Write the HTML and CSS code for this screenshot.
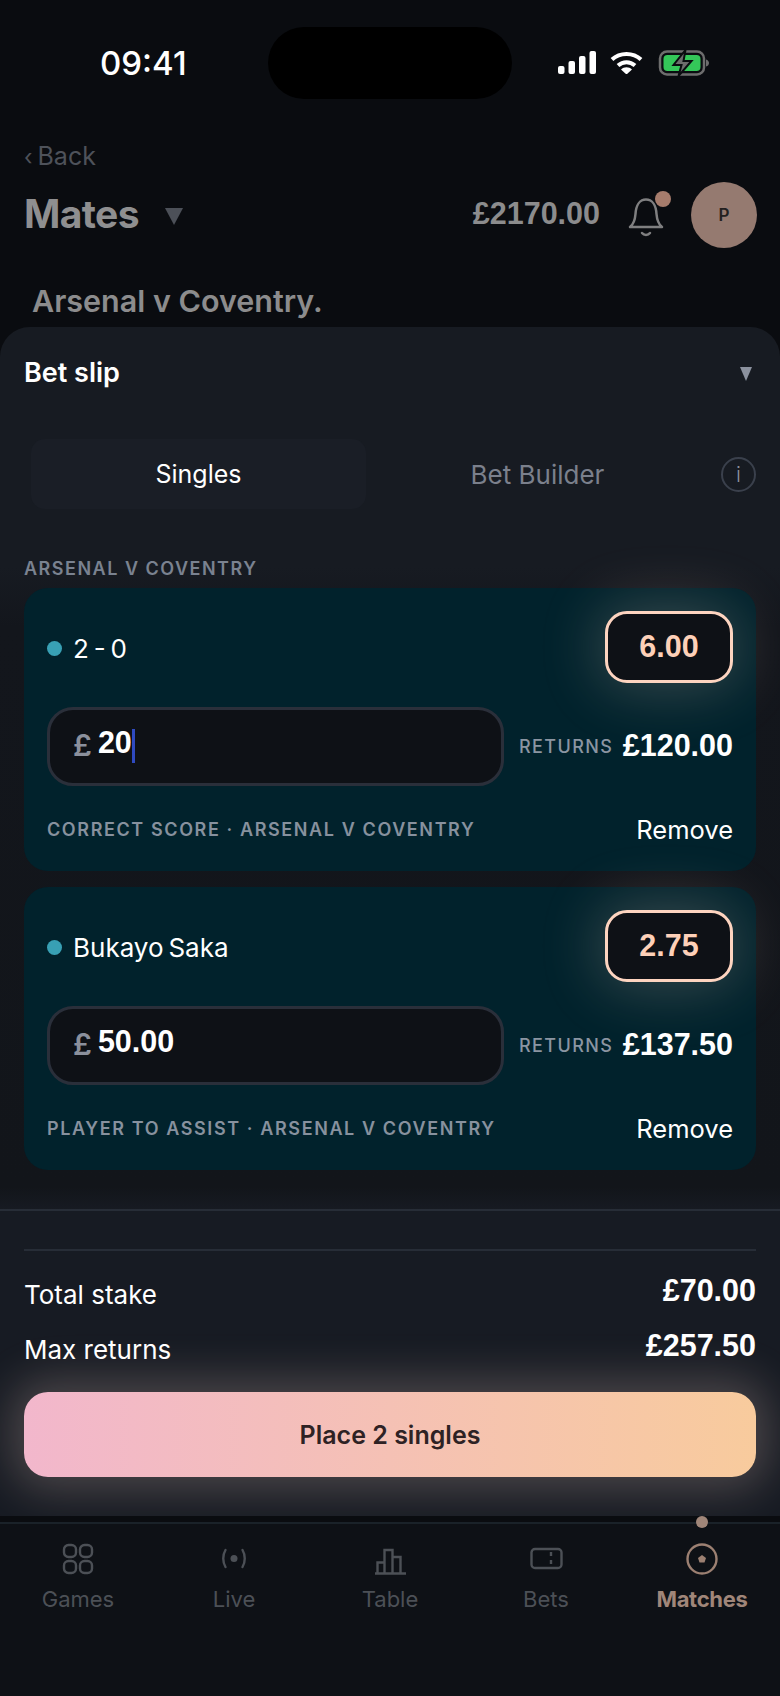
FILE: index.html
```html
<!DOCTYPE html>
<html lang="en">
<head>
<meta charset="utf-8">
<title>Bet slip</title>
<link rel="stylesheet" href="styles.css">
</head>
<body>
<div class="app">
  <header class="top">
    <div class="status">
      <span class="time">09:41</span>
      <div class="status-icons">
        <svg class="sig" width="38" height="23" viewBox="0 0 38 23"><rect x="0" y="15" width="6.5" height="8" rx="2" /><rect x="10.5" y="10" width="6.5" height="13" rx="2"/><rect x="21" y="5" width="6.5" height="18" rx="2"/><rect x="31.5" y="0" width="6.5" height="23" rx="2"/></svg>
        <svg class="wifi" width="33" height="23" viewBox="0 0 33 23"><path d="M2 8.500C10 1 23 1 31 8.500" fill="none" stroke="#fff" stroke-width="4"/><path d="M8 14.500C13 10 20 10 25 14.500" fill="none" stroke="#fff" stroke-width="4"/><path d="M11 18.500C14 15.500 19 15.500 22 18.500L16.500 23.500Z" fill="#fff"/></svg>
        <svg class="batt" width="52" height="26" viewBox="0 0 52 26"><rect x="1.500" y="1.500" width="44" height="23" rx="7" fill="none" stroke="#6d6d6d" stroke-width="2.500"/><rect x="5" y="5" width="37" height="16" rx="4" fill="#34c759"/><path d="M47.500 9.500c2 .5 3 2 3 3.500s-1 3-3 3.500z" fill="#6d6d6d"/><path d="M27 0L15 15h8l-3 11 13-15h-8z" fill="#6d6d6d" stroke="#0a0c10" stroke-width="2"/></svg>
      </div>
      <div class="island"></div>
    </div>
    <a class="back"><span class="chev">‹</span> Back</a>
    <div class="title-row">
      <h1 class="league">Mates</h1>
      <span class="tri tri-title"></span>
      <span class="balance">£2170.00</span>
      <span class="bell">
        <svg width="36" height="40" viewBox="0 0 36 40" fill="none" stroke="#7f7f80" stroke-width="2.500"><path d="M2 30h32c-4-3-5-7-5.500-13C28 8 24 2.500 18 2.500S8 8 7.500 17C7 23 6 27 2 30z" stroke-linejoin="round"/><path d="M14 36c2 2.500 6 2.500 8 0" stroke-linecap="round"/></svg>
        <span class="bell-dot"></span>
      </span>
      <span class="avatar">P</span>
    </div>
    <h2 class="match-title">Arsenal v Coventry.</h2>
  </header>

  <section class="sheet">
    <div class="sheet-head">
      <span class="sheet-title">Bet slip</span>
      <span class="tri tri-sheet"></span>
    </div>
    <div class="tabs">
      <span class="tab active">Singles</span>
      <span class="tab">Bet Builder</span>
      <span class="info">i</span>
    </div>
    <div class="group-label">ARSENAL V COVENTRY</div>

    <article class="card">
      <div class="card-row">
        <span class="dot"></span><span class="pick">2 - 0</span>
        <span class="odds">6.00</span>
      </div>
      <div class="card-row stake-row">
        <div class="stake"><span class="pound">£</span><span class="amount">20</span><span class="caret"></span></div>
        <span class="ret-label">RETURNS</span>
        <span class="ret-value">£120.00</span>
      </div>
      <div class="card-row foot-row">
        <span class="market">CORRECT SCORE · ARSENAL V COVENTRY</span>
        <span class="remove">Remove</span>
      </div>
    </article>

    <article class="card">
      <div class="card-row">
        <span class="dot"></span><span class="pick">Bukayo Saka</span>
        <span class="odds">2.75</span>
      </div>
      <div class="card-row stake-row">
        <div class="stake"><span class="pound">£</span><span class="amount">50.00</span></div>
        <span class="ret-label">RETURNS</span>
        <span class="ret-value">£137.50</span>
      </div>
      <div class="card-row foot-row">
        <span class="market">PLAYER TO ASSIST · ARSENAL V COVENTRY</span>
        <span class="remove">Remove</span>
      </div>
    </article>

    <div class="summary">
      <div class="summary-inner">
        <div class="sum-row"><span class="sum-label">Total stake</span><span class="sum-value">£70.00</span></div>
        <div class="sum-row"><span class="sum-label">Max returns</span><span class="sum-value">£257.50</span></div>
        <button class="place">Place 2 singles</button>
      </div>
    </div>
  </section>

  <nav class="nav">
    <span class="nav-dot"></span>
    <div class="nav-item">
      <svg width="32" height="32" viewBox="0 0 32 32" fill="none" stroke="currentColor" stroke-width="2.400"><rect x="2" y="2" width="12" height="12" rx="4.500"/><rect x="18" y="2" width="12" height="12" rx="4.500"/><rect x="2" y="18" width="12" height="12" rx="4.500"/><rect x="18" y="18" width="12" height="12" rx="4.500"/></svg>
      <span>Games</span>
    </div>
    <div class="nav-item">
      <svg width="32" height="32" viewBox="0 0 32 32" fill="none" stroke="currentColor" stroke-width="2.400" stroke-linecap="round"><path d="M7.500 7c-3 5-3 12 0 17M24.500 7c3 5 3 12 0 17"/><circle cx="16" cy="15.500" r="3.500" fill="currentColor" stroke="none"/></svg>
      <span>Live</span>
    </div>
    <div class="nav-item">
      <svg width="32" height="32" viewBox="0 0 32 32" fill="none" stroke="currentColor" stroke-width="2.400"><path d="M1 30.500h31M3.500 30V19.500h7V30M10.500 30V7h8v23M18.500 30V14h8v16"/></svg>
      <span>Table</span>
    </div>
    <div class="nav-item">
      <svg width="34" height="32" viewBox="0 0 34 32" fill="none" stroke="currentColor" stroke-width="2.400"><path d="M6 6h23a3.500 3.500 0 0 1 3.500 3.500v12a3.500 3.500 0 0 1-3.500 3.500H6a3.500 3.500 0 0 1-3.500-3.500v-12A3.500 3.500 0 0 1 6 6z"/><path d="M22 9v4M22 17v4"/></svg>
      <span>Bets</span>
    </div>
    <div class="nav-item nav-active">
      <svg width="32" height="32" viewBox="0 0 32 32" fill="none" stroke="currentColor" stroke-width="2.400"><circle cx="16" cy="16" r="14.500"/><path d="M16 12l4 2.900-1.500 4.600h-5L12 14.900z" fill="currentColor" stroke="none"/></svg>
      <span>Matches</span>
    </div>
  </nav>
</div>
</body>
</html>
```

FILE: styles.css
```css
* { box-sizing: border-box; margin: 0; padding: 0; }
html, body { background: #0a0c10; }
body { font-family: "Inter", "Liberation Sans", sans-serif; color: #fff; }

.app { width: 780px; height: 1696px; display: flex; flex-direction: column; overflow: hidden; background: #0a0c10; }

.top { height: 327px; flex: none; display: flex; flex-direction: column; padding: 0 24px; }
.status { height: 130px; display: flex; position: relative; margin: 0 -24px; }
.time { font-size: 33px; font-weight: 500; line-height: 36px; margin: 45px 0 0 100px; }
.status-icons { display: flex; align-items: flex-start; margin: 50px 0 0 auto; padding-right: 69px; }
.sig { fill: #fff; margin: 1px 14px 0 0; }
.wifi { margin: 1px 15px 0 0; }
.batt { width: 53px; }
.island { position: absolute; left: 268px; top: 27px; width: 244px; height: 72px; border-radius: 36px; background: #000; }

.back { height: 52px; font-size: 25px; line-height: 52px; color: #4e525a; display: block; word-spacing: -2px; }
.chev { font-size: 22px; }

.title-row { height: 66px; display: flex; align-items: center; }
.league { font-size: 39px; font-weight: 700; color: #8f8f90; letter-spacing: -0.6px; margin-top: -3px; }
.tri { display: block; width: 0; height: 0; border-style: solid; border-color: transparent; border-bottom: 0; }
.tri-title { border-width: 17px 9px 0; border-top-color: #4c5058; margin: 2px 0 0 26px; }
.balance { margin-left: auto; font-family: "Liberation Sans", sans-serif; font-size: 30.500px; font-weight: 700; color: #8c8c8d; margin-top: -3px; }
.bell { position: relative; width: 36px; height: 40px; margin: 3px 0 0 28px; }
.bell-dot { position: absolute; left: 27px; top: -6px; width: 16px; height: 16px; border-radius: 50%; background: #a67c6c; }
.avatar { width: 66px; height: 66px; border-radius: 50%; background: #957a70; margin-left: 27px; margin-right: -1px; display: flex; align-items: center; justify-content: center; color: #23201f; font-size: 17px; font-weight: 600; }

.match-title { margin: 31px 0 0 8px; font-size: 30.500px; line-height: 44px; font-weight: 600; color: #8c8c8d; }

.sheet { height: 1189px; flex: none; background: linear-gradient(180deg, #171b22 0, #171b22 240px, #13161c 300px, #12151a 860px, #171b23 885px); border-radius: 30px 30px 0 0; display: flex; flex-direction: column; overflow: hidden; }
.sheet-head { height: 90px; flex: none; display: flex; align-items: center; justify-content: space-between; padding: 0 28px 0 24px; }
.sheet-title { font-size: 27px; font-weight: 600; }
.tri-sheet { border-width: 14px 6.500px 0; border-top-color: #8b919e; margin-top: 3px; }

.tabs { margin: 22px 24px 0 31px; height: 70px; flex: none; display: flex; align-items: center; }
.tab { width: 335px; height: 70px; display: flex; align-items: center; justify-content: center; font-size: 25px; color: #7b808c; border-radius: 14px; }
.tab.active { background: #1a1e26; color: #fff; }
.tab + .tab { width: 345px; padding-right: 2px; font-size: 26px; }
.info { width: 35px; height: 35px; margin-left: auto; border: 2px solid #3a404c; border-radius: 50%; font-size: 21px; color: #8b919e; display: flex; align-items: center; justify-content: center; font-weight: 300; }

.group-label { margin: 49px 24px 0; height: 22px; line-height: 22px; font-size: 18px; font-weight: 600; letter-spacing: 1.500px; color: #7a8290; flex: none; }

.card { margin: 8px 24px 0; height: 283px; flex: none; background: #01222c; border-radius: 24px; padding: 23px 23px 0; display: flex; flex-direction: column; }
.card + .card { margin-top: 16px; }
.card-row { display: flex; align-items: center; }
.dot { width: 15px; height: 15px; border-radius: 50%; background: #38a0b4; margin: 2px 11px 0 0; }
.pick { font-size: 26px; margin-top: 2px; word-spacing: -2.500px; }
.odds { margin-left: auto; width: 128px; height: 72px; border: 3px solid #fdd4c0; border-radius: 22px; background: #0e1116; color: #fdd0b8; font-family: "Liberation Sans", sans-serif; font-size: 30.500px; font-weight: 700; display: flex; align-items: center; justify-content: center; box-shadow: 0 0 60px 6px rgba(255, 215, 195, 0.22); padding-bottom: 2px; }
.stake-row { margin-top: 24px; }
.stake { width: 457px; height: 79px; background: #0e1116; border: 3px solid #2a2f3a; border-radius: 26px; display: flex; align-items: center; padding-left: 23px; position: relative; }
.pound { font-family: "Inter", sans-serif; font-size: 30px; font-weight: 600; color: #8b909c; margin: -3px 6px 0 0; }
.amount { font-family: "Liberation Sans", sans-serif; font-size: 30.500px; font-weight: 700; margin-top: -8px; }
.caret { display: block; width: 3px; height: 34px; background: #2f4ac0; margin-top: -2px; }
.ret-label { margin-left: 15px; font-size: 18px; font-weight: 500; letter-spacing: 1.400px; color: #8b95a2; }
.ret-value { margin-left: auto; font-family: "Liberation Sans", sans-serif; font-size: 30.500px; font-weight: 700; margin-top: -2px; }
.foot-row { margin-top: 28px; justify-content: space-between; }
.market { font-size: 18px; font-weight: 600; letter-spacing: 1.600px; color: #87919e; }
.remove { font-size: 25.500px; }

.summary { margin-top: 39px; border-top: 2px solid #272d37; flex: 1; padding: 38px 24px 0; background: #171b23; }
.summary-inner { border-top: 2px solid #272d37; padding-top: 20px; display: flex; flex-direction: column; }
.sum-row { display: flex; justify-content: space-between; height: 55px; }
.sum-label { font-size: 26px; line-height: 48px; }
.sum-value { font-family: "Liberation Sans", sans-serif; font-size: 30.500px; font-weight: 700; line-height: 38px; }
.place { margin-top: 11px; height: 85px; border: 0; border-radius: 24px; background: linear-gradient(90deg, #f2b7cc, #f8cb9d); color: #2e2224; font: 600 25px "Inter", sans-serif; box-shadow: 0 0 44px 14px rgba(255, 220, 205, 0.22); }

.nav { flex: 1; position: relative; margin-top: 6px; border-top: 2px solid #1a2229; background: #0e1116; display: flex; padding-top: 19px; }
.nav-dot { position: absolute; left: 696px; top: -8px; width: 12px; height: 12px; border-radius: 50%; background: #a08679; }
.nav-item { width: 156px; display: flex; flex-direction: column; align-items: center; gap: 11px; color: #4c5056; font-size: 22px; }
.nav-active { color: #a08679; font-weight: 700; letter-spacing: -0.3px; }
.nav-active svg { color: #9c8072; }
```
